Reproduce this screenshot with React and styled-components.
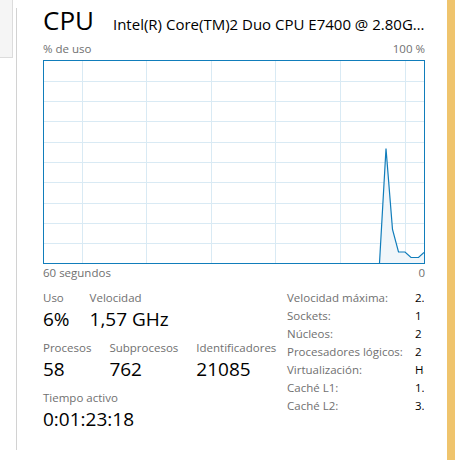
import styled, { createGlobalStyle } from "styled-components";

const GlobalStyle = createGlobalStyle`
  html, body {
    margin: 0;
    padding: 0;
    background: #fff;
  }

  body {
    font-family: "Open Sans", "Noto Sans", sans-serif;
    color: #000;
  }
`;

const Window = styled.div`
  width: 455px;
  height: 460px;
  display: flex;
  overflow: hidden;
  background: #fff;
`;

const SideStrip = styled.div`
  display: flex;
  flex-shrink: 0;
`;

const NavStub = styled.div`
  width: 12px;
  height: 57px;
  background: #f5f5f5;
  border-right: 1px solid #dcdcdc;
  border-bottom: 1px solid #dcdcdc;
`;

const Divider = styled.div`
  width: 1px;
  height: 442px;
  margin: 8px 0 0 3px;
  background: #d2d2d2;
`;

const Main = styled.main`
  width: 382px;
  padding: 0 22px 0 26px;
  flex-shrink: 0;
  display: flex;
  flex-direction: column;
`;

const Accent = styled.div`
  flex: 1;
  background: #efc46d;
`;

const Header = styled.header`
  display: flex;
  align-items: baseline;
  height: 40px;
  gap: 19px;
  white-space: nowrap;
`;

const Title = styled.h1`
  margin: 0;
  font-size: 26px;
  font-weight: 400;
  line-height: 41px;
  color: #000;
`;

const Subtitle = styled.span`
  font-size: 15px;
  overflow: hidden;
  text-overflow: ellipsis;
  color: #000;
`;

const AxisRow = styled.div`
  display: flex;
  justify-content: space-between;
  font-size: 11.5px;
  line-height: 18px;
  color: #707070;
  height: 18px;
`;

const Graph = styled.div`
  width: 380px;
  height: 202px;
  border: 1px solid #117dbb;
  margin-top: 2px;

  svg {
    display: block;
  }
`;

const Stats = styled.section`
  display: flex;
  margin-top: 8px;
`;

const LeftStats = styled.div`
  flex: 1;
  display: flex;
  flex-direction: column;
  gap: 8px;
`;

const StatRow = styled.div`
  display: flex;
  gap: ${(p) => p.$gap || 20}px;
`;

const Stat = styled.div`
  display: flex;
  flex-direction: column;
`;

const Label = styled.span`
  font-size: 11.5px;
  line-height: 16px;
  color: #707070;
  white-space: nowrap;
`;

const Value = styled.span`
  font-size: 19px;
  line-height: 26px;
  color: #000;
  white-space: nowrap;
`;

const InfoList = styled.dl`
  margin: 0;
  width: 138px;
  display: grid;
  grid-template-columns: 128px 9px;
  grid-auto-rows: 18px;
  font-size: 11.5px;
  line-height: 16px;
`;

const InfoKey = styled.dt`
  color: #707070;
  white-space: nowrap;
`;

const InfoValue = styled.dd`
  margin: 0;
  color: #000;
  white-space: nowrap;
  overflow: hidden;
`;

const W = 380;
const H = 202;
const vLines = [38, 102, 167, 231, 296, 361];
const hLines = [20, 40, 60, 81, 101, 121, 142, 162, 182];
const usage = [
  [335.5, 202],
  [342, 87.5],
  [348.5, 168.5],
  [354.5, 191],
  [361, 191],
  [367, 196.5],
  [374.5, 196.5],
  [380, 191.5],
];

function UsageChart() {
  const line = usage.map(([x, y]) => `${x},${y}`).join(" ");
  const area = `${line} 380,202 335.5,202`;

  return (
    <svg width={W} height={H} viewBox={`0 0 ${W} ${H}`}>
      {vLines.map((x) => (
        <line key={`v${x}`} x1={x + 0.5} y1={0} x2={x + 0.5} y2={H} stroke="#d9eaf4" />
      ))}
      {hLines.map((y) => (
        <line key={`h${y}`} x1={0} y1={y + 0.5} x2={W} y2={y + 0.5} stroke="#d9eaf4" />
      ))}
      <polygon points={area} fill="#f1f6fa" />
      <polyline points={line} fill="none" stroke="#117dbb" strokeWidth="1.2" />
    </svg>
  );
}

const info = [
  ["Velocidad máxima:", "2.80 GHz"],
  ["Sockets:", "1"],
  ["Núcleos:", "2"],
  ["Procesadores lógicos:", "2"],
  ["Virtualización:", "Habilitado"],
  ["Caché L1:", "1.0 KB"],
  ["Caché L2:", "3.0 MB"],
];

export default function App() {
  return (
    <>
      <GlobalStyle />
      <Window>
        <SideStrip>
          <NavStub />
          <Divider />
        </SideStrip>
        <Main>
          <Header>
            <Title>CPU</Title>
            <Subtitle>Intel(R) Core(TM)2 Duo CPU E7400 @ 2.80GHz</Subtitle>
          </Header>
          <AxisRow>
            <span>% de uso</span>
            <span>100 %</span>
          </AxisRow>
          <Graph>
            <UsageChart />
          </Graph>
          <AxisRow>
            <span>60 segundos</span>
            <span>0</span>
          </AxisRow>
          <Stats>
            <LeftStats>
              <StatRow>
                <Stat>
                  <Label>Uso</Label>
                  <Value>6%</Value>
                </Stat>
                <Stat>
                  <Label>Velocidad</Label>
                  <Value>1,57 GHz</Value>
                </Stat>
              </StatRow>
              <StatRow $gap={18}>
                <Stat>
                  <Label>Procesos</Label>
                  <Value>58</Value>
                </Stat>
                <Stat>
                  <Label>Subprocesos</Label>
                  <Value>762</Value>
                </Stat>
                <Stat>
                  <Label>Identificadores</Label>
                  <Value>21085</Value>
                </Stat>
              </StatRow>
              <StatRow>
                <Stat>
                  <Label>Tiempo activo</Label>
                  <Value>0:01:23:18</Value>
                </Stat>
              </StatRow>
            </LeftStats>
            <InfoList>
              {info.map(([k, v]) => (
                <>
                  <InfoKey key={k}>{k}</InfoKey>
                  <InfoValue key={k + "v"}>{v}</InfoValue>
                </>
              ))}
            </InfoList>
          </Stats>
        </Main>
        <Accent />
      </Window>
    </>
  );
}
